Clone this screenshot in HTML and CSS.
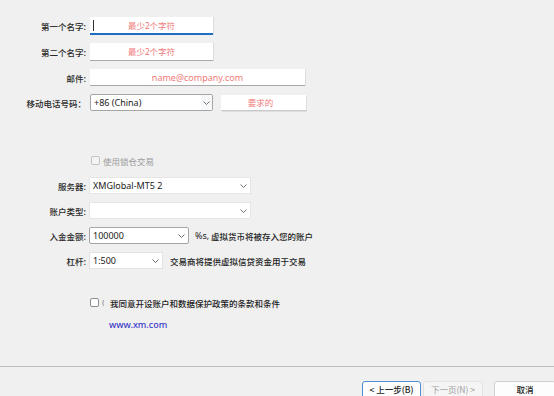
FILE: index.html
```html
<!DOCTYPE html>
<html>
<head>
<meta charset="utf-8">
<link rel="stylesheet" href="styles.css">
</head>
<body>
<div class="page">
  <div class="sec1">
    <div class="row h18">
      <div class="label">第一个名字:</div>
      <div class="field input w123 focus"><span class="ph">最少2个字符</span></div>
    </div>
    <div class="row h18">
      <div class="label">第二个名字:</div>
      <div class="field input w123"><span class="ph">最少2个字符</span></div>
    </div>
    <div class="row h17">
      <div class="label">邮件:</div>
      <div class="field input w214"><span class="ph lat">name@company.com</span></div>
    </div>
    <div class="row h17">
      <div class="label">移动电话号码：</div>
      <div class="field combo w123 phone"><span class="val lat">+86 (China)</span><span class="arrowbox"><svg class="chev" width="7" height="4" viewBox="0 0 7 4"><polyline points="0.5,0.5 3.5,3.5 6.5,0.5" fill="none" stroke="#707070" stroke-width="1"/></svg></span></div>
      <div class="reqbtn"><span class="ph">要求的</span></div>
    </div>
  </div>

  <div class="sec2">
    <div class="row h17">
      <div class="label"></div>
      <div class="check disabled"><span class="box"></span><span class="ctext">使用锁仓交易</span></div>
    </div>
    <div class="row h17">
      <div class="label l2">服务器:</div>
      <div class="field select w162"><span class="val lat">XMGlobal-MT5 2</span><svg class="chev" width="7" height="4" viewBox="0 0 7 4"><polyline points="0.5,0.5 3.5,3.5 6.5,0.5" fill="none" stroke="#707070" stroke-width="1"/></svg></div>
    </div>
    <div class="row h17">
      <div class="label l2">账户类型:</div>
      <div class="field select w162"><span class="val lat"></span><svg class="chev" width="7" height="4" viewBox="0 0 7 4"><polyline points="0.5,0.5 3.5,3.5 6.5,0.5" fill="none" stroke="#707070" stroke-width="1"/></svg></div>
    </div>
    <div class="row h17">
      <div class="label l2">入金金额:</div>
      <div class="field combo w100"><span class="val lat">100000</span><svg class="chev" width="7" height="4" viewBox="0 0 7 4"><polyline points="0.5,0.5 3.5,3.5 6.5,0.5" fill="none" stroke="#707070" stroke-width="1"/></svg></div>
      <div class="note n1"><span class="lat">%s,</span>&nbsp;虚拟货币将被存入您的账户</div>
    </div>
    <div class="row h17">
      <div class="label l2">杠杆:</div>
      <div class="field select light w74"><span class="val lat">1:500</span><svg class="chev" width="7" height="4" viewBox="0 0 7 4"><polyline points="0.5,0.5 3.5,3.5 6.5,0.5" fill="none" stroke="#707070" stroke-width="1"/></svg></div>
      <div class="note n2">交易商将提供虚拟信贷资金用于交易</div>
    </div>
  </div>

  <div class="agree">
    <span class="box"></span><span class="mark">(</span><span class="atext">我同意开设账户和数据保护政策的条款和条件</span>
  </div>
  <div class="link lat">www.xm.com</div>

  <div class="spacer"></div>

  <div class="footer">
    <button class="btn prev">&lt; 上一步(B)</button>
    <button class="btn next">下一页(N) &gt;</button>
    <button class="btn cancel">取消</button>
  </div>
</div>
</body>
</html>
```
FILE: styles.css
```css
* { box-sizing: border-box; }
html, body {
  margin: 0;
  padding: 0;
  background: #f0f0f0;
}
body {
  font-family: "Noto Sans CJK SC", "Noto Sans", sans-serif;
  font-size: 8.5px;
  font-weight: 500;
  color: #222;
}
.lat {
  font-family: "Noto Sans", "Noto Sans CJK SC", sans-serif;
  font-size: 9px;
  font-weight: 400;
}
.page {
  display: flex;
  flex-direction: column;
  height: 396px;
  overflow: hidden;
}
.sec1 {
  margin-top: 17px;
  display: flex;
  flex-direction: column;
  gap: 8px;
}
.sec2 {
  margin-top: 41px;
  display: flex;
  flex-direction: column;
  gap: 8px;
}
.row {
  display: flex;
  align-items: stretch;
}
.h18 { height: 18px; }
.h17 { height: 17px; }
.label {
  width: 87px;
  flex: none;
  text-align: right;
  padding-right: 1px;
  margin-right: 3px;
  display: flex;
  align-items: center;
  justify-content: flex-end;
  color: #2a2a2a;
}
.label.l2 { margin-right: 2px; }
.field {
  flex: none;
  background: #fff;
  position: relative;
  display: flex;
  align-items: center;
}
.w123 { width: 123px; }
.w214 { width: 215px; }
.w162 { width: 162px; }
.w100 { width: 100px; }
.w74 { width: 74px; }

.input {
  justify-content: center;
  border-bottom: 1px solid #a9a9a9;
  box-shadow: 1px 0 0 #dcdcdc;
}
.input.focus {
  border-bottom: 2px solid #1f6fc0;
}
.input.focus::before {
  content: "";
  position: absolute;
  left: 3px;
  top: 3px;
  width: 1px;
  height: 11px;
  background: #333;
}
.ph {
  color: #f07a7a;
  font-weight: 400;
  line-height: 1;
}
.val {
  padding-left: 3px;
  flex: 1;
  color: #1a1a1a;
  white-space: nowrap;
}
.chev {
  flex: none;
  margin-right: 3px;
  margin-left: 2px;
}
.combo {
  border: 1px solid #a5a5a5;
  border-radius: 2px;
}
.phone .arrowbox {
  align-self: stretch;
  width: 11px;
  display: flex;
  align-items: center;
  justify-content: center;
  background: #f6f8fa;
}
.phone .arrowbox .chev { margin: 0; }
.reqbtn {
  margin-left: 8px;
  margin-top: 1px;
  width: 85px;
  background: #fff;
  display: flex;
  align-items: center;
  justify-content: center;
  border-bottom: 1px solid #c9c9c9;
  box-shadow: 1px 1px 0 #dedede;
  padding-right: 6px;
}
.select {
  border: 1px solid #e6e6e6;
}
.select.light {
  border-color: #e2e2e2;
}
.check {
  display: flex;
  align-items: center;
  margin-left: 1px;
}
.box {
  width: 9px;
  height: 9px;
  border: 1px solid #8e8e8e;
  border-radius: 2px;
  background: #fff;
  flex: none;
}
.check.disabled .box {
  border-color: #c4c4c4;
  background: #f4f4f4;
}
.ctext {
  margin-left: 3px;
  color: #9a9a9a;
  font-weight: 400;
}
.note {
  display: flex;
  align-items: center;
  white-space: nowrap;
}
.n1 { margin-left: 6px; }
.n2 { margin-left: 7px; }
.agree {
  margin-top: 25px;
  height: 17px;
  display: flex;
  align-items: center;
  padding-left: 90px;
}
.mark {
  font-size: 6px;
  color: #555;
  margin-left: 3px;
  width: 8px;
}
.atext { color: #222; }
.link {
  margin-top: 5px;
  height: 17px;
  padding-left: 109px;
  display: flex;
  align-items: center;
  color: #3a3ac8;
  font-weight: 500;
}
.spacer { flex: 1; }
.footer {
  flex: none;
  height: 30px;
  border-top: 1px solid #bcbcbc;
  padding-top: 14px;
  padding-left: 362px;
  display: flex;
  align-items: flex-start;
}
.btn {
  font-family: "Noto Sans CJK SC", "Noto Sans", sans-serif;
  font-size: 8.5px;
  font-weight: 500;
  height: 22px;
  padding: 0;
  border-radius: 3px;
  background: #fdfdfd;
  border: 1px solid #d0d0d0;
  color: #222;
  display: flex;
  justify-content: center;
  align-items: flex-start;
  padding-top: 1px;
  line-height: 12px;
  flex: none;
}
.prev {
  width: 59px;
  border-color: #4a8fd6;
}
.next {
  width: 60px;
  margin-left: 2px;
  color: #a0a0a0;
  background: #f5f5f5;
  border-color: #e3e3e3;
  font-weight: 400;
}
.cancel {
  width: 62px;
  margin-left: 11px;
}
```
